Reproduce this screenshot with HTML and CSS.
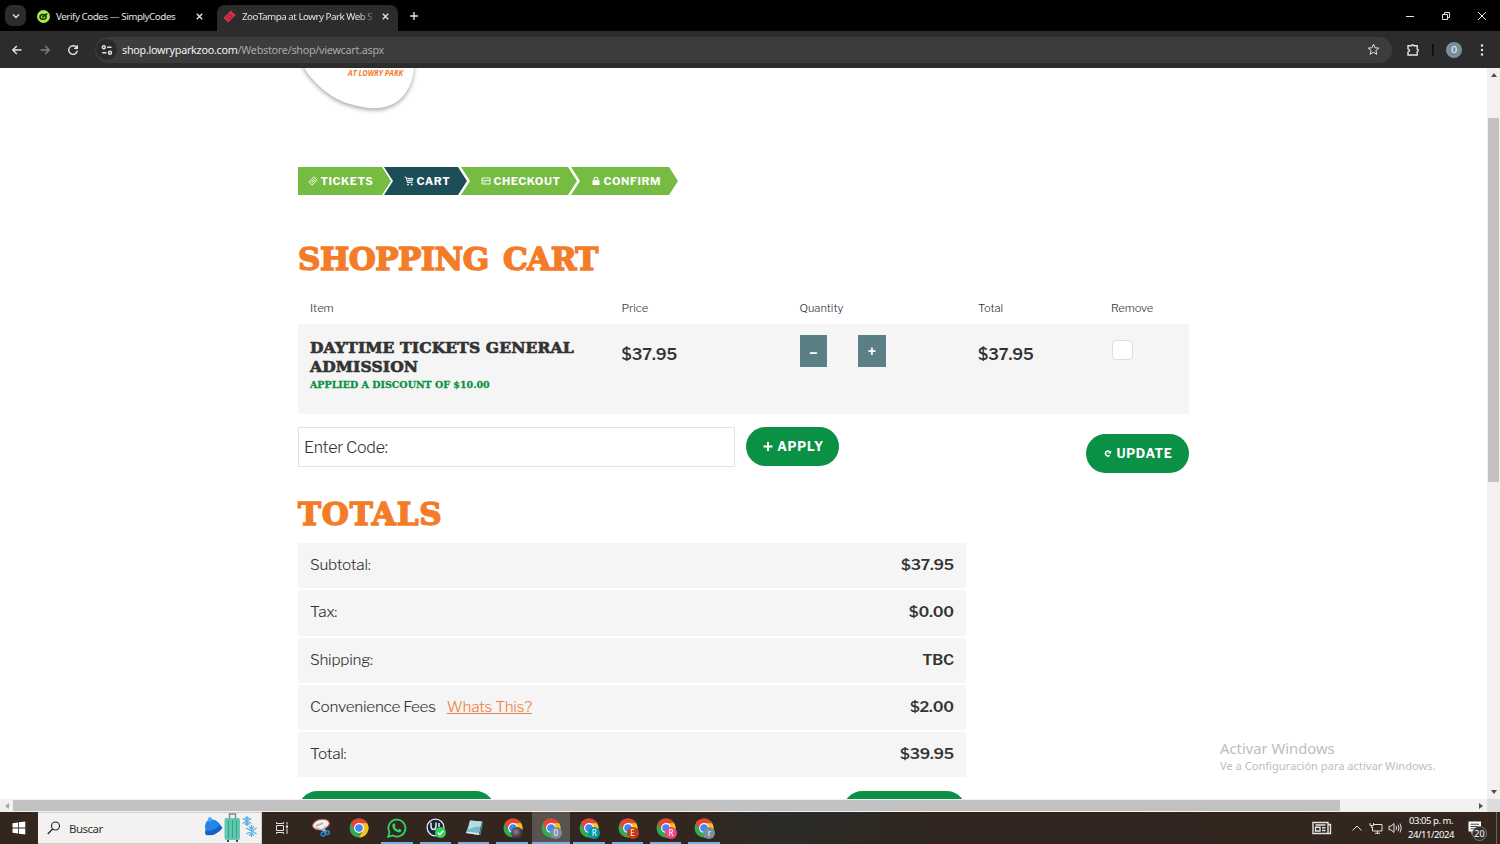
FILE: index.html
```html
<!DOCTYPE html>
<html lang="es">
  <head>
    <meta charset="UTF-8" />
    <meta name="viewport" content="width=device-width, initial-scale=1.0" />
    <title>ZooTampa at Lowry Park Web Store</title>
    <link rel="stylesheet" href="styles.css">
  </head>
  <body>
    <svg class="defs">
      <symbol id="chrome" viewBox="0 0 20 20">
        <circle cx="10" cy="10" r="9.5" fill="#34a853" />
        <path d="M10 10 L1.8 5.2 A9.5 9.5 0 0 1 18.2 5.2 Z" fill="#ea4335" />
        <path d="M10 5.2 H18.2 A9.5 9.5 0 0 1 10 19.5 L14.2 12.4 Z" fill="#fbc116" />
        <path d="M1.8 5.2 L5.9 12.4 L10 5.2 Z" fill="#ea4335" />
        <circle cx="10" cy="10" r="4.9" fill="#fff" />
        <circle cx="10" cy="10" r="3.8" fill="#4285f4" />
      </symbol>
    </svg>

    <div class="tabs">
      <div class="tab-search">
        <svg width="10" height="10" viewBox="0 0 10 10"><path d="M2 3.5 L5 6.5 L8 3.5" class="line" /></svg>
      </div>
      <div class="tab">
        <svg width="13" height="13" viewBox="0 0 13 13"><circle cx="6.5" cy="6.5" r="6.5" fill="#a6ee4e" /><ellipse cx="6" cy="6.9" rx="3" ry="2.3" fill="none" stroke="#173009" stroke-width="1.5" /><path d="M5.2 7.4 L10.2 3.6" stroke="#173009" stroke-width="1.5" /></svg>
        <span class="tab-name">Verify Codes — SimplyCodes</span>
        <svg class="close" width="9" height="9" viewBox="0 0 9 9"><path d="M1.8 1.8 L7.2 7.2 M7.2 1.8 L1.8 7.2" class="line" /></svg>
      </div>
      <div class="tab active">
        <svg width="13" height="13" viewBox="0 0 13 13"><path d="M7.8 0.5 L9 1.5 Q9 3 10.5 3 L12.6 5 L5 12.6 L3.3 10.8 Q3.3 9.5 2 9.5 L0.5 8 Z" fill="#e0304c" /><path d="M4 7.2 L7.2 4 L9.2 6 L6 9.2 Z" fill="none" stroke="#8c1c32" stroke-width="1" /></svg>
        <span class="tab-name fade">ZooTampa at Lowry Park Web S</span>
        <svg class="close" width="9" height="9" viewBox="0 0 9 9"><path d="M1.8 1.8 L7.2 7.2 M7.2 1.8 L1.8 7.2" class="line" /></svg>
      </div>
      <svg class="new-tab" width="10" height="10" viewBox="0 0 10 10"><path d="M5 1 V9 M1 5 H9" class="line" /></svg>
      <div class="window-buttons">
        <svg width="10" height="10" viewBox="0 0 10 10"><path d="M1 5.5 H9" class="thin" /></svg>
        <svg width="10" height="10" viewBox="0 0 10 10"><path d="M1.5 3.5 H6.5 V8.5 H1.5 Z M3.5 3.5 V1.5 H8.5 V6.5 H6.5" class="thin" /></svg>
        <svg width="10" height="10" viewBox="0 0 10 10"><path d="M1 1 L9 9 M9 1 L1 9" class="thin" /></svg>
      </div>
    </div>

    <div class="toolbar">
      <svg width="12" height="12" viewBox="0 0 12 12"><path d="M10.5 6 H2 M5.8 2 L1.8 6 L5.8 10" class="line" /></svg>
      <svg class="dim" width="12" height="12" viewBox="0 0 12 12"><path d="M1.5 6 H10 M6.2 2 L10.2 6 L6.2 10" class="line" /></svg>
      <svg width="12" height="12" viewBox="0 0 12 12"><path d="M9.8 4 A4.3 4.3 0 1 0 10.3 6.6 M10.3 1.2 V4.4 H7" class="line" /></svg>
      <div class="address">
        <div class="site-info">
          <svg width="12" height="12" viewBox="0 0 12 12"><circle cx="2.8" cy="3.3" r="1.5" class="line" /><path d="M6.2 3.3 H10.5 M1.2 8.7 H5.5" class="line" /><circle cx="9" cy="8.7" r="1.5" class="line" /></svg>
        </div>
        <span class="url"><b>shop.lowryparkzoo.com</b>/Webstore/shop/viewcart.aspx</span>
        <svg width="13" height="13" viewBox="0 0 13 13"><path d="M6.5 1.3 L8 4.8 L11.8 5.1 L8.9 7.6 L9.8 11.3 L6.5 9.3 L3.2 11.3 L4.1 7.6 L1.2 5.1 L5 4.8 Z" class="thin" /></svg>
      </div>
      <svg class="extension" width="14" height="14" viewBox="0 0 14 14"><path d="M2 2.8 H5.4 Q6.6 0.8 7.8 2.8 H11.2 V6.2 Q13.4 7.3 11.2 8.5 V12 H2 V9 Q5 7.4 2 5.8 Z" class="line" /></svg>
      <div class="separator"></div>
      <div class="profile">0</div>
      <svg class="menu" width="4" height="14" viewBox="0 0 4 14"><g fill="#e3e3e3"><circle cx="2" cy="2.5" r="1.2" /><circle cx="2" cy="7" r="1.2" /><circle cx="2" cy="11.5" r="1.2" /></g></svg>
    </div>

    <div class="viewport">
      <div class="page">
        <svg class="logo" width="125" height="50" viewBox="0 0 125 50">
          <path d="M4 -4 C12 12 32 31 52 36 C74 43 94 42 106 27 C113 18 116 8 116 -4 Z" />
          <text x="50" y="7.5" textLength="55" lengthAdjust="spacingAndGlyphs">AT LOWRY PARK</text>
        </svg>

        <div class="steps">
          <div class="step first">
            <svg width="10" height="10" viewBox="0 0 10 10"><path d="M6 0.8 L7 1.8 Q7 3 8.2 3 L9.2 4 L4 9.2 L3 8.2 Q3 7 1.8 7 L0.8 6 Z M3.4 5.8 L5.8 3.4 L6.6 4.2 L4.2 6.6 Z" class="white slim" /></svg>
            TICKETS
          </div>
          <div class="step current">
            <svg width="10" height="10" viewBox="0 0 10 10"><path d="M0.5 1.2 H2.2 L3.4 6.6 H8.6 M2.6 2.4 H9 L8.3 4.8 H3 M5 2.4 V4.8 M7 2.4 V4.8" class="white slim" /><circle cx="4" cy="8.6" r="0.9" fill="#fff" /><circle cx="7.8" cy="8.6" r="0.9" fill="#fff" /></svg>
            CART
          </div>
          <div class="step checkout">
            <svg width="10" height="10" viewBox="0 0 10 10"><path d="M1 2 H9 V8 H1 Z M1 4.6 H9 M2.5 6.3 H4.5" class="white slim" /></svg>
            CHECKOUT
          </div>
          <div class="step confirm">
            <svg width="10" height="10" viewBox="0 0 10 10"><path d="M1.5 4.2 H8.5 V9 H1.5 Z" fill="#fff" /><path d="M3.2 4.5 V3 A1.8 1.8 0 0 1 6.8 3 V4.5" class="white" /></svg>
            CONFIRM
          </div>
        </div>

        <h1 class="heading cart-heading">SHOPPING CART</h1>

        <div class="cart-row cart-head">
          <div>Item</div>
          <div>Price</div>
          <div>Quantity</div>
          <div>Total</div>
          <div>Remove</div>
        </div>
        <div class="cart-row cart-item">
          <div>
            <div class="item-name">DAYTIME TICKETS GENERAL<br>ADMISSION</div>
            <div class="discount">APPLIED A DISCOUNT OF $10.00</div>
          </div>
          <div class="price">$37.95</div>
          <div class="quantity">
            <button class="qty">–</button>
            <button class="qty">+</button>
          </div>
          <div class="price">$37.95</div>
          <div><div class="checkbox"></div></div>
        </div>

        <div class="code-row">
          <div class="code-input">Enter Code:</div>
          <button class="pill apply">
            <svg width="10" height="10" viewBox="0 0 10 10"><path d="M5 1 V10 M0.5 5.5 H9.5" stroke="#fff" stroke-width="2" /></svg>
            APPLY
          </button>
          <button class="pill update">
            <svg width="8" height="8" viewBox="0 0 8 8"><path d="M5.6 6.3 A2.4 2.4 0 1 1 5.6 2.8" fill="none" stroke="#fff" stroke-width="1.5" /><path d="M7.2 1.4 V4.6 H3.6 Z" fill="#fff" /></svg>
            UPDATE
          </button>
        </div>

        <h1 class="heading totals-heading">TOTALS</h1>

        <div class="totals">
          <div class="total-row"><span>Subtotal:</span><b>$37.95</b></div>
          <div class="total-row"><span>Tax:</span><b>$0.00</b></div>
          <div class="total-row"><span>Shipping:</span><b>TBC</b></div>
          <div class="total-row"><span>Convenience Fees <a class="whats-this">Whats This?</a></span><b>$2.00</b></div>
          <div class="total-row"><span>Total:</span><b>$39.95</b></div>
        </div>

        <div class="bottom-buttons">
          <div class="pill continue"></div>
          <div class="pill next"></div>
        </div>
      </div>

      <div class="scroll-y">
        <div class="arrow up"></div>
        <div class="thumb-y"></div>
        <div class="arrow down"></div>
      </div>

      <div class="watermark">
        <div class="watermark-title">Activar Windows</div>
        <div class="watermark-text">Ve a Configuración para activar Windows.</div>
      </div>
    </div>

    <div class="scroll-x">
      <div class="arrow left"></div>
      <div class="thumb-x"></div>
      <div class="arrow right"></div>
      <div class="corner"></div>
    </div>

    <div class="taskbar">
      <div class="start">
        <svg width="14" height="14" viewBox="0 0 14 14"><path d="M0.5 2.2 L6 1.4 V6.6 H0.5 Z M6.8 1.3 L13.3 0.4 V6.6 H6.8 Z M0.5 7.4 H6 V12.6 L0.5 11.8 Z M6.8 7.4 H13.3 V13.6 L6.8 12.7 Z" fill="#fff" /></svg>
      </div>
      <div class="search">
        <svg width="14" height="14" viewBox="0 0 14 14"><circle cx="8.5" cy="5" r="4" fill="none" stroke="#222" stroke-width="1.1" /><path d="M5.6 8 L0.8 13" stroke="#222" stroke-width="1.2" /></svg>
        <span>Buscar</span>
        <svg class="search-art" width="56" height="32" viewBox="0 0 56 32">
          <path d="M1 21 C-1 14 0 8 6 7.5 C12 7 15 12 17 15 Q16 19 13 20 Q7 24 1 21 Z" fill="#2584e8" />
          <path d="M1 23 Q-1 20 1 18.5 Q9 20 14 13 L17.5 16 Q10 25 1 23 Z" fill="#1263c4" />
          <circle cx="5" cy="7.5" r="2.2" fill="#4ba8f7" />
          <path d="M24.5 7 V2 H30.5 V7" fill="none" stroke="#7e8894" stroke-width="1.4" />
          <rect x="19.5" y="6" width="15.5" height="22" rx="2" fill="#62c9b0" />
          <path d="M23.5 8 V26 M27.5 8 V26 M31.5 8 V26" stroke="#3aa48f" stroke-width="1.2" />
          <path d="M23 28 V30 M32 28 V30" stroke="#444" stroke-width="2" />
          <g fill="none" stroke="#5aaee8" stroke-width="1.3">
            <path d="M42 4 V14 M37.7 6.5 L46.3 11.5 M46.3 6.5 L37.7 11.5 M40 5.5 L42 7.3 L44 5.5 M40 12.5 L42 10.7 L44 12.5" />
            <path d="M46.5 13 V25 M41.3 16 L51.7 22 M51.7 16 L41.3 22 M44 14.5 L46.5 16.9 L49 14.5 M44 23.5 L46.5 21.1 L49 23.5" />
          </g>
        </svg>
      </div>
      <div class="app task-view">
        <svg width="14" height="14" viewBox="0 0 14 14"><path d="M1.5 4.5 H8.5 V9.5 H1.5 Z M1.5 1 V2.5 H8.5 V1 M1.5 13 V11.5 H8.5 V13 M12 1 V3.5 M12 7.5 V13" class="thin" /><path d="M11 4.5 H13 V6.8 H11 Z" fill="#eee" /></svg>
      </div>
      <div class="app">
        <svg width="20" height="20" viewBox="0 0 20 20"><ellipse cx="10" cy="6.5" rx="8.5" ry="5" transform="rotate(-12 10 6.5)" fill="#f4f0f0" stroke="#c84b49" stroke-width="1" /><path d="M5 8 L12 5" stroke="#b9b9b9" stroke-width="2" /><path d="M4 10 L12 12 L16 14 M14 8 L13 14" stroke="#a8c0cf" stroke-width="1.5" fill="none" /><circle cx="16.3" cy="14.5" r="2" fill="none" stroke="#2f82c4" stroke-width="1.6" /><circle cx="12.2" cy="16" r="2" fill="none" stroke="#2f82c4" stroke-width="1.6" /></svg>
      </div>
      <div class="app"><svg width="20" height="20"><use href="#chrome" /></svg></div>
      <div class="app open">
        <svg width="20" height="20" viewBox="0 0 20 20"><path d="M1.2 18.8 L2.5 14.2 A8.5 8.5 0 1 1 5.8 17.5 Z" fill="none" stroke="#2fd566" stroke-width="1.8" /><path d="M6 5.8 Q7.5 4.5 8 6 L8.5 7.6 L7.7 8.8 Q8.8 11 11.2 12 L12.3 10.8 L14.5 12 Q14.3 14.5 12 14.5 Q6 13.2 5.2 8 Q5.2 6.6 6 5.8 Z" fill="#2fd566" /></svg>
      </div>
      <div class="app open">
        <svg width="20" height="20" viewBox="0 0 20 20"><circle cx="9.5" cy="9.5" r="8.4" fill="#192638" stroke="#e6e9ee" stroke-width="1.3" /><path d="M5 4.5 V8 Q5 11.5 7.5 11.5 Q10 11.5 10 8 V4.5 M13 9 V5" fill="none" stroke="#e6e9ee" stroke-width="1.5" /><circle cx="14.5" cy="14.5" r="5.5" fill="#2ed25b" /><path d="M11.8 14.5 L13.8 16.5 L17.3 12.8" fill="none" stroke="#fff" stroke-width="1.6" /></svg>
      </div>
      <div class="app open">
        <svg width="20" height="20" viewBox="0 0 20 20"><path d="M6 2.5 L18 3.5 L15 17 L2 15 Z" fill="#79b8cb" /><path d="M6 2.5 L18 3.5 L16.8 8.5 Q9 8 4 12 Z" fill="#b7dce5" /><path d="M2 15 L15 17 L15.4 15.3 L2.5 13.6 Z" fill="#e4e9e9" /><path d="M18 3.5 L19 5 L16.5 17.5 L15 17 Z" fill="#487b8d" /></svg>
      </div>
      <div class="app open"><svg width="20" height="20"><use href="#chrome" /></svg><span class="badge photo"></span></div>
      <div class="app open selected"><svg width="20" height="20"><use href="#chrome" /></svg><span class="badge grey">0</span></div>
      <div class="app open"><svg width="20" height="20"><use href="#chrome" /></svg><span class="badge teal">R</span></div>
      <div class="app open"><svg width="20" height="20"><use href="#chrome" /></svg><span class="badge red">E</span></div>
      <div class="app open"><svg width="20" height="20"><use href="#chrome" /></svg><span class="badge pink">R</span></div>
      <div class="app open"><svg width="20" height="20"><use href="#chrome" /></svg><span class="badge grey">r</span></div>

      <div class="tray">
        <svg width="20" height="14" viewBox="0 0 20 14"><path d="M1 1.5 H16 V12.5 H1 Z M16 3.5 H18.5 V12.5 H16 M3.5 6.2 H8 V10 H3.5 Z M3.5 4 H13.5 M10 6.7 H13.5 M10 9.5 H13.5" class="line" /></svg>
        <svg class="chevron" width="12" height="12" viewBox="0 0 12 12"><path d="M1.5 8.5 L6 4 L10.5 8.5" class="thin" /></svg>
        <svg class="network" width="14" height="12" viewBox="0 0 14 12"><path d="M5 2.5 H13 V9 H3.5 V5 M6 11.3 H11 M8.5 9 V11.3 M1 1 V3.5 H4.5 V1 M2.7 3.5 V6" class="thin" /></svg>
        <svg class="volume" width="14" height="12" viewBox="0 0 14 12"><path d="M1 4.2 H3 L6 1.5 V10.5 L3 7.8 H1 Z M8 4.2 Q9.3 6 8 7.8 M10 2.8 Q12 6 10 9.2 M12 1.5 Q14.6 6 12 10.5" class="thin" /></svg>
        <div class="clock">03:05 p. m.<br>24/11/2024</div>
        <div class="notifications">
          <svg width="14" height="14" viewBox="0 0 14 14"><path d="M0.5 0.5 H13 V10.5 H6.5 L3.5 13.5 V10.5 H0.5 Z" fill="#fff" /><path d="M2.5 3.2 H11 M2.5 5.5 H11 M2.5 7.8 H8" stroke="#33271f" stroke-width="0.9" /></svg>
          <span class="count">20</span>
        </div>
      </div>
    </div>
  </body>
</html>
```

FILE: styles.css
```css
* {
  box-sizing: border-box;
}
body {
  margin: 0;
  width: 1500px;
  height: 844px;
  overflow: hidden;
  display: flex;
  flex-direction: column;
  background-color: #fff;
  font-family: "Libre Franklin", Inter, sans-serif;
  color: #333;
}
svg {
  display: block;
  flex: none;
}
button {
  border: none;
  padding: 0;
  font-family: inherit;
  cursor: pointer;
}
.defs {
  display: none;
}
.line {
  fill: none;
  stroke: #e3e3e3;
  stroke-width: 1.4;
}
.thin {
  fill: none;
  stroke: #e3e3e3;
  stroke-width: 1;
}
.white {
  fill: none;
  stroke: #fff;
  stroke-width: 1.1;
}
.slim {
  stroke-width: 0.9;
}

/* browser tabs */
.tabs {
  height: 31px;
  flex: none;
  display: flex;
  align-items: center;
  background-color: #000;
  font-family: "Noto Sans", sans-serif;
  font-size: 9.8px;
  color: #e3e3e3;
}
.tab-search {
  width: 21px;
  height: 21px;
  margin-left: 5px;
  display: flex;
  align-items: center;
  justify-content: center;
  border-radius: 7px;
  background-color: #2c2c2c;
}
.tab {
  display: flex;
  align-items: center;
  width: 180px;
  padding: 1px 13px 0 0;
  margin-left: 11px;
}
.tab-name {
  flex: 1;
  margin-left: 6px;
  white-space: nowrap;
  letter-spacing: -0.45px;
}
.close {
  margin-left: 7px;
}
.tab.active {
  align-self: flex-end;
  width: 181px;
  height: 26px;
  margin-left: 0;
  padding: 0 8px 4px 6px;
  background-color: #2c2c2c;
  border-radius: 8px 8px 0 0;
}
.active .tab-name {
  letter-spacing: -0.5px;
}
.fade {
  mask-image: linear-gradient(to right, #000 88%, transparent 103%);
}
.new-tab {
  margin-left: 11px;
}
.window-buttons {
  margin-left: auto;
  margin-right: 13px;
  display: flex;
  gap: 26px;
}

/* address bar */
.toolbar {
  height: 37px;
  flex: none;
  display: flex;
  align-items: center;
  padding-left: 11px;
  gap: 16px;
  background-color: #2c2c2c;
}
.dim {
  opacity: 0.45;
}
.address {
  width: 1297px;
  height: 26px;
  display: flex;
  align-items: center;
  padding: 0 12px 0 1px;
  border-radius: 13px;
  background-color: #3c3c3c;
}
.site-info {
  width: 21px;
  height: 21px;
  display: flex;
  align-items: center;
  justify-content: center;
  border-radius: 50%;
  background-color: #2a2a2a;
}
.url {
  flex: 1;
  margin-left: 5px;
  font-family: "Noto Sans", sans-serif;
  font-size: 10.8px;
  letter-spacing: -0.27px;
  color: #a9a9a9;
}
.url b {
  font-weight: normal;
  color: #f1f1f1;
}
.extension {
  margin-left: -2px;
}
.separator {
  width: 2px;
  height: 12px;
  margin: 0 -4px;
  background-color: #111;
}
.profile {
  width: 16px;
  height: 16px;
  border-radius: 50%;
  background-color: #78909c;
  color: #fff;
  font-size: 9px;
  line-height: 16px;
  text-align: center;
}
.menu {
  margin-left: 2px;
}

/* page */
.viewport {
  position: relative;
  height: 731px;
  flex: none;
  display: flex;
  justify-content: space-between;
  overflow: hidden;
}
.page {
  width: 891px;
  margin-left: 298px;
}
.logo path {
  fill: #fff;
  filter: drop-shadow(0 2px 2px rgba(0, 0, 0, 0.35));
}
.logo text {
  font-family: "Open Sans", sans-serif;
  font-size: 9.5px;
  font-weight: bold;
  font-style: italic;
  fill: #f47c29;
}
.steps {
  display: flex;
  margin-top: 49px;
  height: 28px;
}
.step {
  display: flex;
  align-items: center;
  gap: 2.5px;
  margin-left: -6px;
  padding-left: 20px;
  background-color: #76bc43;
  clip-path: polygon(0 0, calc(100% - 9px) 0, 100% 50%, calc(100% - 9px) 100%, 0 100%, 9px 50%);
  color: #fff;
  font-size: 11px;
  font-weight: 700;
  letter-spacing: 0.55px;
}
.step.first {
  width: 93px;
  margin-left: 0;
  padding-left: 10px;
  clip-path: polygon(0 0, calc(100% - 9px) 0, 100% 50%, calc(100% - 9px) 100%, 0 100%);
}
.step.current {
  width: 83px;
  margin-left: -7px;
  background-color: #1c4e57;
}
.step.checkout {
  width: 116px;
}
.step.confirm {
  width: 107px;
}
.heading {
  margin: 0;
  font-family: "DejaVu Serif", serif;
  font-size: 31px;
  line-height: 36px;
  font-weight: bold;
  color: #f47c29;
  -webkit-text-stroke: 1.5px #f47c29;
}
.cart-heading {
  margin-top: 46px;
  letter-spacing: -0.5px;
  word-spacing: 4px;
  white-space: nowrap;
}
.cart-row {
  display: grid;
  grid-template-columns: 311.5px 178px 178.5px 133px 1fr;
  padding-left: 12px;
}
.cart-head {
  margin-top: 23px;
  height: 24px;
  line-height: 16px;
  font-size: 11.2px;
  font-weight: 350;
  letter-spacing: -0.05px;
}
.cart-item {
  height: 90px;
  padding-top: 11px;
  background-color: #f5f5f5;
}
.item-name {
  margin-top: 3px;
  font-family: "DejaVu Serif", serif;
  font-size: 15.5px;
  line-height: 19px;
  font-weight: bold;
  letter-spacing: 0.15px;
  white-space: nowrap;
  -webkit-text-stroke: 0.7px #333;
}
.discount {
  margin-top: 3px;
  font-family: "DejaVu Serif", serif;
  font-size: 9.5px;
  line-height: 12px;
  font-weight: bold;
  color: #0b9145;
  white-space: nowrap;
  -webkit-text-stroke: 0.3px #0b9145;
}
.price {
  padding-top: 10px;
  font-size: 16px;
  line-height: 20px;
  font-weight: 600;
}
.quantity {
  display: flex;
  gap: 31px;
}
.qty {
  width: 27.5px;
  height: 32px;
  background-color: #5a8085;
  color: #fff;
  font-size: 14px;
  font-weight: bold;
}
.checkbox {
  width: 21px;
  height: 20px;
  margin: 5px 0 0 1px;
  border: 1px solid #ddd;
  border-radius: 4px;
  background-color: #fff;
}
.code-row {
  display: flex;
  margin-top: 13px;
}
.code-input {
  width: 437px;
  height: 40px;
  padding-left: 5px;
  border: 1px solid #e2e2e2;
  font-size: 16px;
  line-height: 39px;
  font-weight: 350;
  letter-spacing: -0.25px;
}
.pill {
  display: flex;
  align-items: center;
  justify-content: center;
  gap: 4px;
  height: 39px;
  padding: 0 0 1px 2px;
  border-radius: 20px;
  background-color: #0b9145;
  color: #fff;
  font-size: 12.5px;
  font-weight: 700;
  letter-spacing: 0.75px;
}
.apply {
  width: 93px;
  margin-left: 11px;
}
.update {
  width: 103px;
  margin: 7px 0 0 auto;
}
.totals-heading {
  margin-top: 23px;
  letter-spacing: 0.8px;
}
.totals {
  display: flex;
  flex-direction: column;
  gap: 2px;
  width: 668px;
  margin-top: 11px;
}
.total-row {
  display: flex;
  justify-content: space-between;
  height: 45.3px;
  padding: 0 12px;
  background-color: #f5f5f5;
  font-size: 15.4px;
  font-weight: 350;
  letter-spacing: -0.27px;
  line-height: 44px;
}
.total-row b {
  font-weight: 600;
  letter-spacing: -0.12px;
}
.whats-this {
  margin-left: 8px;
  color: #f08040;
  text-decoration: underline;
}
.bottom-buttons {
  display: flex;
  justify-content: space-between;
  width: 668px;
  margin-top: 14px;
}
.continue {
  width: 197px;
}
.next {
  width: 123px;
}

/* scrollbars */
.scroll-y {
  display: flex;
  flex-direction: column;
  align-items: center;
  width: 13px;
  padding: 5px 0;
  background-color: #f1f1f1;
}
.thumb-y {
  width: 11px;
  height: 364px;
  margin: 41px 0 auto;
  background-color: #c1c1c1;
}
.arrow {
  border: 3px solid transparent;
}
.up {
  border-top: none;
  border-bottom: 4px solid #505050;
}
.down {
  border-bottom: none;
  border-top: 4px solid #505050;
}
.left {
  border-left: none;
  border-right: 4px solid #a3a3a3;
}
.right {
  border-right: none;
  border-left: 4px solid #505050;
}
.scroll-x {
  height: 13px;
  flex: none;
  display: flex;
  align-items: center;
  padding-left: 5px;
  background-color: #f1f1f1;
}
.thumb-x {
  width: 1327px;
  height: 11px;
  margin: 0 auto 0 4px;
  background-color: #c1c1c1;
}
.corner {
  width: 13px;
  height: 13px;
  margin-left: 4px;
  background-color: #dcdcdc;
}
.watermark {
  position: absolute;
  left: 1220px;
  top: 670px;
  font-family: "Noto Sans", sans-serif;
  color: #bdbdbd;
  white-space: nowrap;
}
.watermark-title {
  font-size: 14.8px;
  line-height: 20px;
}
.watermark-text {
  font-size: 11.1px;
  line-height: 16px;
}

/* windows taskbar */
.taskbar {
  height: 32px;
  flex: none;
  display: flex;
  background: linear-gradient(to right, #33261f 46%, #2b2b28 52%, #30261f 62%, #33261f);
  font-family: "Noto Sans", sans-serif;
}
.start {
  width: 38px;
  display: flex;
  align-items: center;
  justify-content: center;
}
.search {
  width: 224px;
  display: flex;
  align-items: center;
  padding-left: 9px;
  border: 1px solid #cfcfcf;
  border-left: none;
  background-color: #f3f2f1;
  font-size: 11.5px;
  letter-spacing: -0.5px;
}
.search span {
  margin-left: 8px;
}
.search-art {
  margin-left: auto;
}
.app {
  position: relative;
  width: 38.4px;
  display: flex;
  align-items: center;
  justify-content: center;
}
.task-view {
  width: 39.4px;
}
.open::after {
  content: "";
  position: absolute;
  left: 3px;
  right: 4px;
  bottom: 0;
  height: 2px;
  background-color: #76b0e4;
}
.selected {
  background-color: #5a524d;
}
.selected::after {
  left: 0;
  right: 0;
}
.badge {
  position: absolute;
  left: 18px;
  top: 15px;
  width: 12px;
  height: 12px;
  border-radius: 50%;
  color: #fff;
  font-size: 8px;
  line-height: 12px;
  text-align: center;
}
.photo {
  background: radial-gradient(circle at 40% 40%, #8d8590, #35313a 60%);
}
.grey {
  background-color: #78909c;
}
.teal {
  background-color: #0097a7;
}
.red {
  background-color: #c53a17;
}
.pink {
  background-color: #ec4884;
}
.tray {
  margin-left: auto;
  display: flex;
  align-items: center;
  color: #fff;
}
.chevron {
  margin-left: 19px;
}
.network {
  margin-left: 6px;
}
.volume {
  margin-left: 5px;
}
.clock {
  width: 46px;
  margin-left: 6px;
  font-size: 9.5px;
  line-height: 14px;
  letter-spacing: -0.45px;
  text-align: center;
  white-space: nowrap;
}
.notifications {
  position: relative;
  width: 29px;
  height: 32px;
  margin: 0 3px 0 14px;
  padding-top: 9px;
  border-right: 1px solid #6b625d;
}
.count {
  position: absolute;
  left: 4px;
  top: 14px;
  width: 15px;
  height: 15px;
  border: 1px solid #777;
  border-radius: 50%;
  background-color: #33302e;
  font-size: 9px;
  line-height: 13px;
  text-align: center;
}
```
